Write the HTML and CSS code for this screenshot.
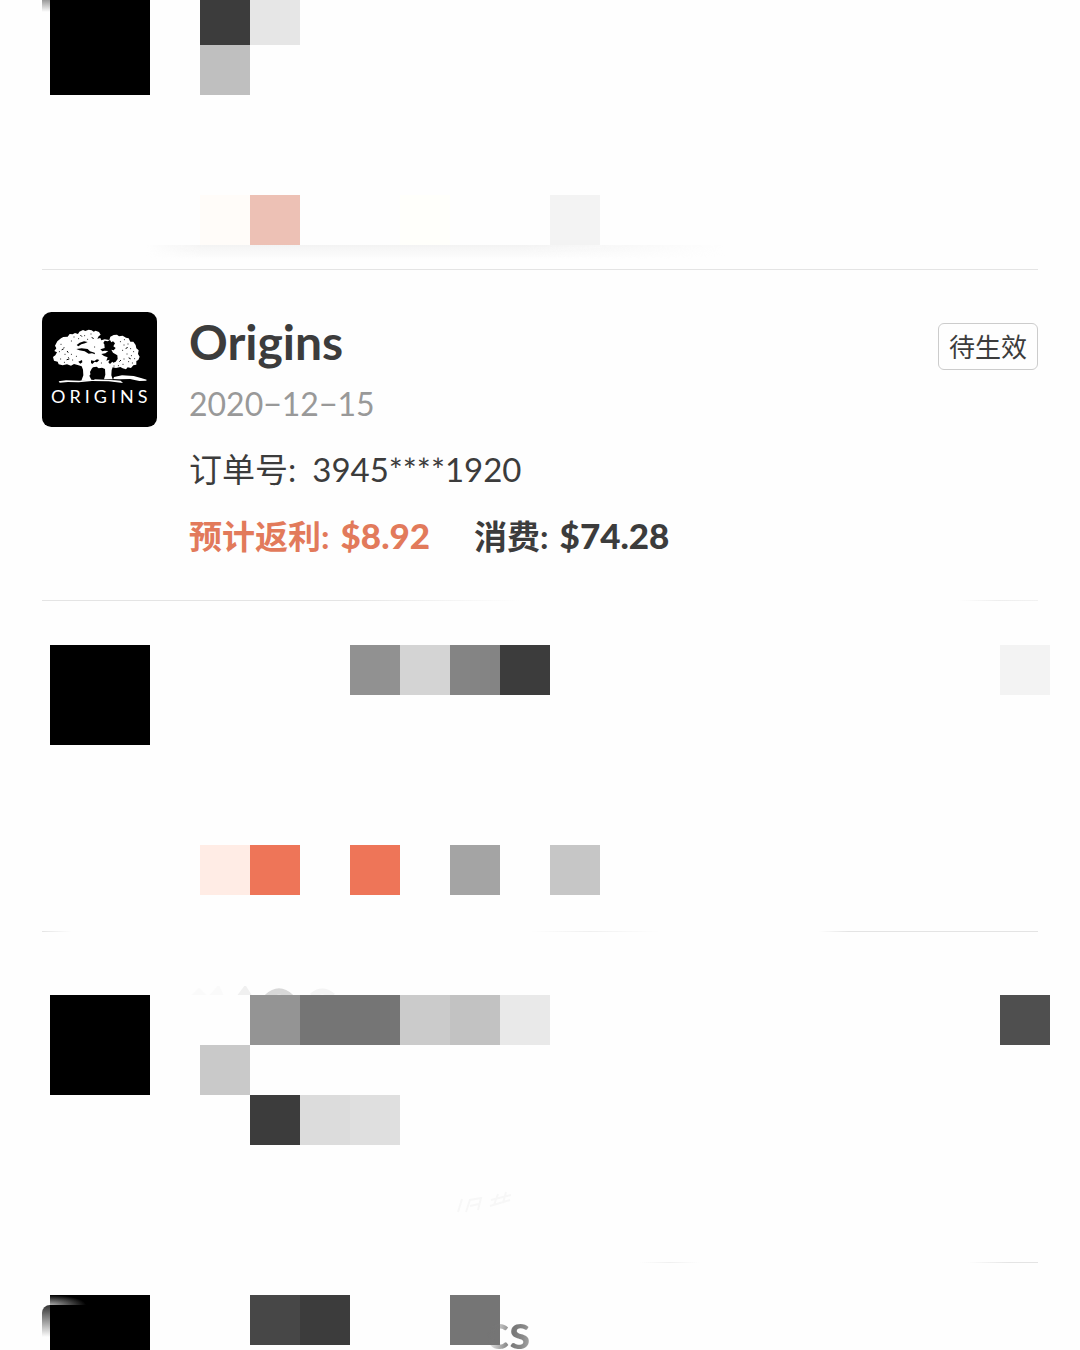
FILE: index.html
```
<!DOCTYPE html>
<html lang="zh-CN">
  <head>
    <meta charset="utf-8" />
    <meta name="viewport" content="width=device-width, initial-scale=1" />
    <title>Origins</title>
    <link rel="stylesheet" href="styles.css" />
  </head>
  <body>
    <ul class="orders">
      <li class="order first">
        <div class="corner"></div>
        <div class="mosaic">
          <span class="thumb black"></span>
          <span class="c4 r1 g3d"></span>
          <span class="c5 r1 ge6"></span>
          <span class="c4 r2 gbf"></span>
          <span class="c4 r5 cream"></span>
          <span class="c5 r5 pink"></span>
          <span class="c8 r5 ivory"></span>
          <span class="c11 r5 gf3"></span>
        </div>
        <div class="shade"></div>
      </li>

      <li class="order detail">
        <svg class="logo" viewBox="0 0 345 345" role="img" aria-label="Origins">
          <rect width="345" height="345" rx="28" fill="#000" />
          <g fill="#fff">
            <path d="M36 146 L33 135 L40 130 L45 121 L37 117 L43 109 L39 101 L46 88 L57 79 L64 75 L77 74 L83 66 L92 67 L99 63 L108 66 L112 59 L123 54 L130 57 L140 53 L149 55 L155 59 L161 56 L171 60 L176 68 L170 73 L166 80 L175 78 L178 85 L188 82 L202 84 L205 74 L215 69 L225 68 L231 73 L242 71 L252 77 L260 79 L265 89 L274 89 L281 99 L283 109 L290 115 L288 126 L293 134 L289 144 L283 147 L283 158 L274 160 L267 168 L257 166 L252 172 L242 169 L235 165 L222 168 L212 166 L209 174 L208 190 L212 202 L186 202 L190 188 L189 171 L180 167 L170 169 L164 164 L153 166 L149 170 L144 180 L146 190 L151 200 L158 205 L118 206 L124 190 L123 173 L119 163 L107 159 L96 156 L87 161 L75 157 L62 160 L50 157 L47 149 Z" />
            <path d="M50 208 L72 205 L112 206 L155 202 L190 203 L220 205 L236 206 L243 213 L200 208 L150 207 L110 211 L78 210 L53 212 Z" />
            <path d="M216 195 L240 190 L275 192 L297 198 L314 203 L313 206 L292 207 L264 201 L232 202 L214 201 Z" />
          </g>
          <g fill="#000">
            <path d="M184 93 L188 86 L197 88 L204 84 L208 91 L213 88 L219 94 L214 103 L221 108 L215 115 L208 113 L213 122 L226 130 L227 141 L221 149 L214 152 L211 149 L204 156 L199 151 L203 143 L193 146 L197 136 L186 132 L178 126 L190 124 L199 117 L188 116 L181 118 L175 112 L188 108 L187 97 Z" />
            <path d="M104 99 L113 92 L126 88 L137 90 L129 94 L118 97 L109 103 Z" />
            <path d="M103 111 L119 109 L137 111 L144 118 L158 122 L159 127 L150 124 L140 125 L128 118 L112 115 Z" />
            <path d="M147 145 L157 147 L165 142 L172 144 L165 151 L158 149 L151 156 L147 153 Z" />
            <path d="M109 149 L120 144 L121 151 L115 155 Z" />
            <path d="M142 191 L149 184 L151 191 L158 204 L148 203 Z" />
          </g>
          <g class="leaf-gaps">
            <path d="M57 97h.1M66 107h.1M52 119h.1M69 127h.1M79 137h.1M56 141h.1M88 127h.1M92 144h.1M88 87h.1M96 75h.1M110 80h.1M128 71h.1M147 66h.1M137 82h.1M158 105h.1M103 133h.1M67 151h.1M235 89h.1M247 83h.1M246 99h.1M258 96h.1M266 110h.1M242 115h.1M255 126h.1M268 131h.1M278 140h.1M275 119h.1M246 141h.1M260 149h.1M243 157h.1M229 161h.1M216 162h.1M271 153h.1M178 153h.1" />
            <path d="M60 113l4-2M76 118l2 3M75 143l6-2M116 70l3 3M150 77l4 2M252 109l4-2M261 138l4 2M233 148l3-3" />
          </g>
          <text x="27" y="272" class="logo-name">ORIGINS</text>
        </svg>
        <div class="info">
          <div class="head">
            <h2>Origins</h2>
            <span class="status">待生效</span>
          </div>
          <time datetime="2020-12-15">2020−12−15</time>
          <p class="number"><span>订单号:</span><span>3945****1920</span></p>
          <p class="amounts">
            <span class="rebate">预计返利: <b>$8.92</b></span>
            <span>消费: <b>$74.28</b></span>
          </p>
        </div>
      </li>

      <li class="order third">
        <div class="mosaic">
          <span class="thumb black"></span>
          <span class="c7 r1 g91"></span>
          <span class="c8 r1 gd4"></span>
          <span class="c9 r1 g84"></span>
          <span class="c10 r1 g3d"></span>
          <span class="end r1 gf3"></span>
          <span class="c4 r5 blush"></span>
          <span class="c5 r5 orange"></span>
          <span class="c7 r5 orange"></span>
          <span class="c9 r5 ga4"></span>
          <span class="c11 r5 gc6"></span>
        </div>
      </li>

      <li class="order fourth">
        <svg class="ghost" viewBox="0 0 160 9" aria-hidden="true">
          <path d="M4 11l5-5 5 5M22 11l6-7 3 7" stroke="#fafafa" />
          <path d="M49 12l6-8 5 8" stroke="#f0f0f0" />
          <path d="M76 12q13-13 26 0" stroke="#d8d8d8" />
          <path d="M122 10q10-9 21 0" stroke="#f3f3f3" />
        </svg>
        <div class="mosaic">
          <span class="thumb black"></span>
          <span class="c5 r1 g94"></span>
          <span class="c6 r1 g75"></span>
          <span class="c7 r1 g75"></span>
          <span class="c8 r1 gcb"></span>
          <span class="c9 r1 gc2"></span>
          <span class="c10 r1 ge9"></span>
          <span class="end r1 g4f"></span>
          <span class="c4 r2 gc9"></span>
          <span class="c5 r3 g3d"></span>
          <span class="c6 r3 gdc"></span>
          <span class="c7 r3 gdf"></span>
        </div>
        <svg class="watermark" viewBox="0 0 64 30" aria-hidden="true">
          <path d="M2 26l4-13M10 26l4-12 11-2-3 12M14 20l9-2M35 14l20-5M42 8l-4 11M50 6l-3 11M34 20l20-6" />
        </svg>
      </li>

      <li class="order last">
        <div class="edge"></div>
        <div class="mosaic">
          <span class="thumb black glare"></span>
          <span class="c5 r1 g47"></span>
          <span class="c6 r1 g3d"></span>
          <span class="c9 r1 g75"></span>
        </div>
        <span class="rest">cs</span>
      </li>
    </ul>
  </body>
</html>
```

FILE: styles.css
```
* {
  box-sizing: border-box;
}
body {
  margin: 0;
  background-color: #fefefe;
  color: #3c3c3c;
  font-family: Lato, "Noto Sans CJK SC", sans-serif;
}
h2,
p {
  margin: 0;
}
.orders {
  list-style: none;
  margin: 0;
  padding: 0 42px;
}
.order {
  position: relative;
  height: 331px;
}
/* divider under every order */
.order::after {
  content: "";
  position: absolute;
  left: 0;
  right: 0;
  bottom: 0;
  height: 1px;
  background: #e4e4e4;
}
.first {
  height: 270px;
}
.detail::after {
  background: linear-gradient(to right, #e4e4e4 30%, transparent 48%, transparent 92%, #eee 96%, #f2f2f2);
}
.third {
  padding-top: 44px;
}
.third::after {
  background: linear-gradient(to right, #e4e4e4, transparent 3%, transparent 49%, #f0f0f0 55%, transparent 62%, transparent 78%, #e4e4e4 81%);
}
.fourth {
  padding-top: 63px;
}
.fourth::after {
  background: linear-gradient(to right, transparent 60%, #f0f0f0 63%, transparent 66%, transparent 93%, #e4e4e4 97%);
}
.last {
  height: auto;
  padding-top: 32px;
}
.last::after {
  display: none;
}

/* pixelated orders */
.mosaic {
  display: grid;
  grid-template-columns: repeat(11, 50px) 1fr 50px;
  grid-template-rows: repeat(5, 50px);
  margin: 0 -12px 0 8px;
}
.first .mosaic {
  grid-template-rows: 45px repeat(4, 50px);
}
.last .mosaic {
  grid-template-rows: 50px 5px;
}
.thumb { grid-column: 1 / 3; grid-row: 1 / 3; }
.c4 { grid-column: 4; }
.c5 { grid-column: 5; }
.c6 { grid-column: 6; }
.c7 { grid-column: 7; }
.c8 { grid-column: 8; }
.c9 { grid-column: 9; }
.c10 { grid-column: 10; }
.c11 { grid-column: 11; }
.end { grid-column: 13; }
.r1 { grid-row: 1; }
.r2 { grid-row: 2; }
.r3 { grid-row: 3; }
.r5 { grid-row: 5; }
.black { background-color: #000; }
.g3d { background-color: #3c3c3c; }
.g47 { background-color: #474747; }
.g4f { background-color: #4f4f4f; }
.g75 { background-color: #757575; }
.g84 { background-color: #848484; }
.g91 { background-color: #919191; }
.g94 { background-color: #949494; }
.ga4 { background-color: #a4a4a4; }
.gbf { background-color: #bfbfbf; }
.gc2 { background-color: #c2c2c2; }
.gc6 { background-color: #c6c6c6; }
.gc9 { background-color: #c9c9c9; }
.gcb { background-color: #cbcbcb; }
.gd4 { background-color: #d4d4d4; }
.gdc { background-color: #dcdcdc; }
.gdf { background-color: #dfdfdf; }
.ge6 { background-color: #e6e6e6; }
.ge9 { background-color: #e9e9e9; }
.gf3 { background-color: #f3f3f3; }
.cream { background-color: #fffcf9; }
.ivory { background-color: #fffffb; }
.pink { background-color: #edc1b5; }
.blush { background-color: #ffece5; }
.orange { background-color: #ee7558; }

.corner {
  position: absolute;
  left: 0;
  top: 0;
  width: 8px;
  height: 12px;
  background: linear-gradient(#999, transparent);
}
.shade {
  width: 580px;
  height: 14px;
  margin-left: 104px;
  background: linear-gradient(#f3f3f3, transparent);
  -webkit-mask-image: linear-gradient(to right, transparent, #000 10%, #000 65%, transparent);
  mask-image: linear-gradient(to right, transparent, #000 10%, #000 65%, transparent);
}
.ghost {
  position: absolute;
  left: 148px;
  top: 54px;
  width: 160px;
  height: 9px;
  fill: none;
  stroke-width: 6;
}
.watermark {
  position: absolute;
  left: 414px;
  top: 254px;
  width: 64px;
  height: 30px;
  fill: none;
  stroke: #f7f7f7;
  stroke-width: 2;
}
.edge {
  position: absolute;
  left: 0;
  top: 42px;
  width: 8px;
  height: 32px;
  border-top-left-radius: 8px;
  background: linear-gradient(#333, transparent);
}
.glare {
  background-image: radial-gradient(ellipse 36px 10px at 0 10px, #aaa, transparent);
  background-size: 100% 10px;
  background-repeat: no-repeat;
}
.rest {
  position: absolute;
  left: 444px;
  top: 47px;
  font-size: 48px;
  font-weight: bold;
  line-height: 42px;
  color: transparent;
  background: linear-gradient(100deg, transparent 10%, #777 60%, #888 80%, #aaa);
  background-clip: text;
  -webkit-background-clip: text;
}

/* readable order */
.detail {
  display: flex;
  gap: 32px;
  padding-top: 42px;
}
.logo {
  flex: none;
  width: 115px;
  height: 115px;
}
.leaf-gaps {
  fill: none;
  stroke: #000;
  stroke-width: 3;
  stroke-linecap: round;
}
.logo-name {
  fill: #fff;
  font-size: 54px;
  letter-spacing: 12px;
}
.info {
  flex: 1;
}
.head {
  display: flex;
  justify-content: space-between;
  align-items: center;
}
h2 {
  font-size: 48px;
  line-height: 60px;
}
.status {
  margin-top: 8px;
  padding: 1px 10px 0;
  border: 1px solid #ccc;
  border-radius: 6px;
  font-size: 26px;
  line-height: 44px;
}
time {
  display: block;
  font-size: 32px;
  line-height: 64px;
  color: #999;
}
.number,
.amounts {
  display: flex;
  font-size: 33px;
  line-height: 66px;
}
.number {
  gap: 16px;
}
.amounts {
  gap: 44px;
  font-weight: bold;
}
.amounts b {
  margin-left: 3px;
  font-size: 35px;
}
.rebate {
  color: #e27a5b;
}
```
